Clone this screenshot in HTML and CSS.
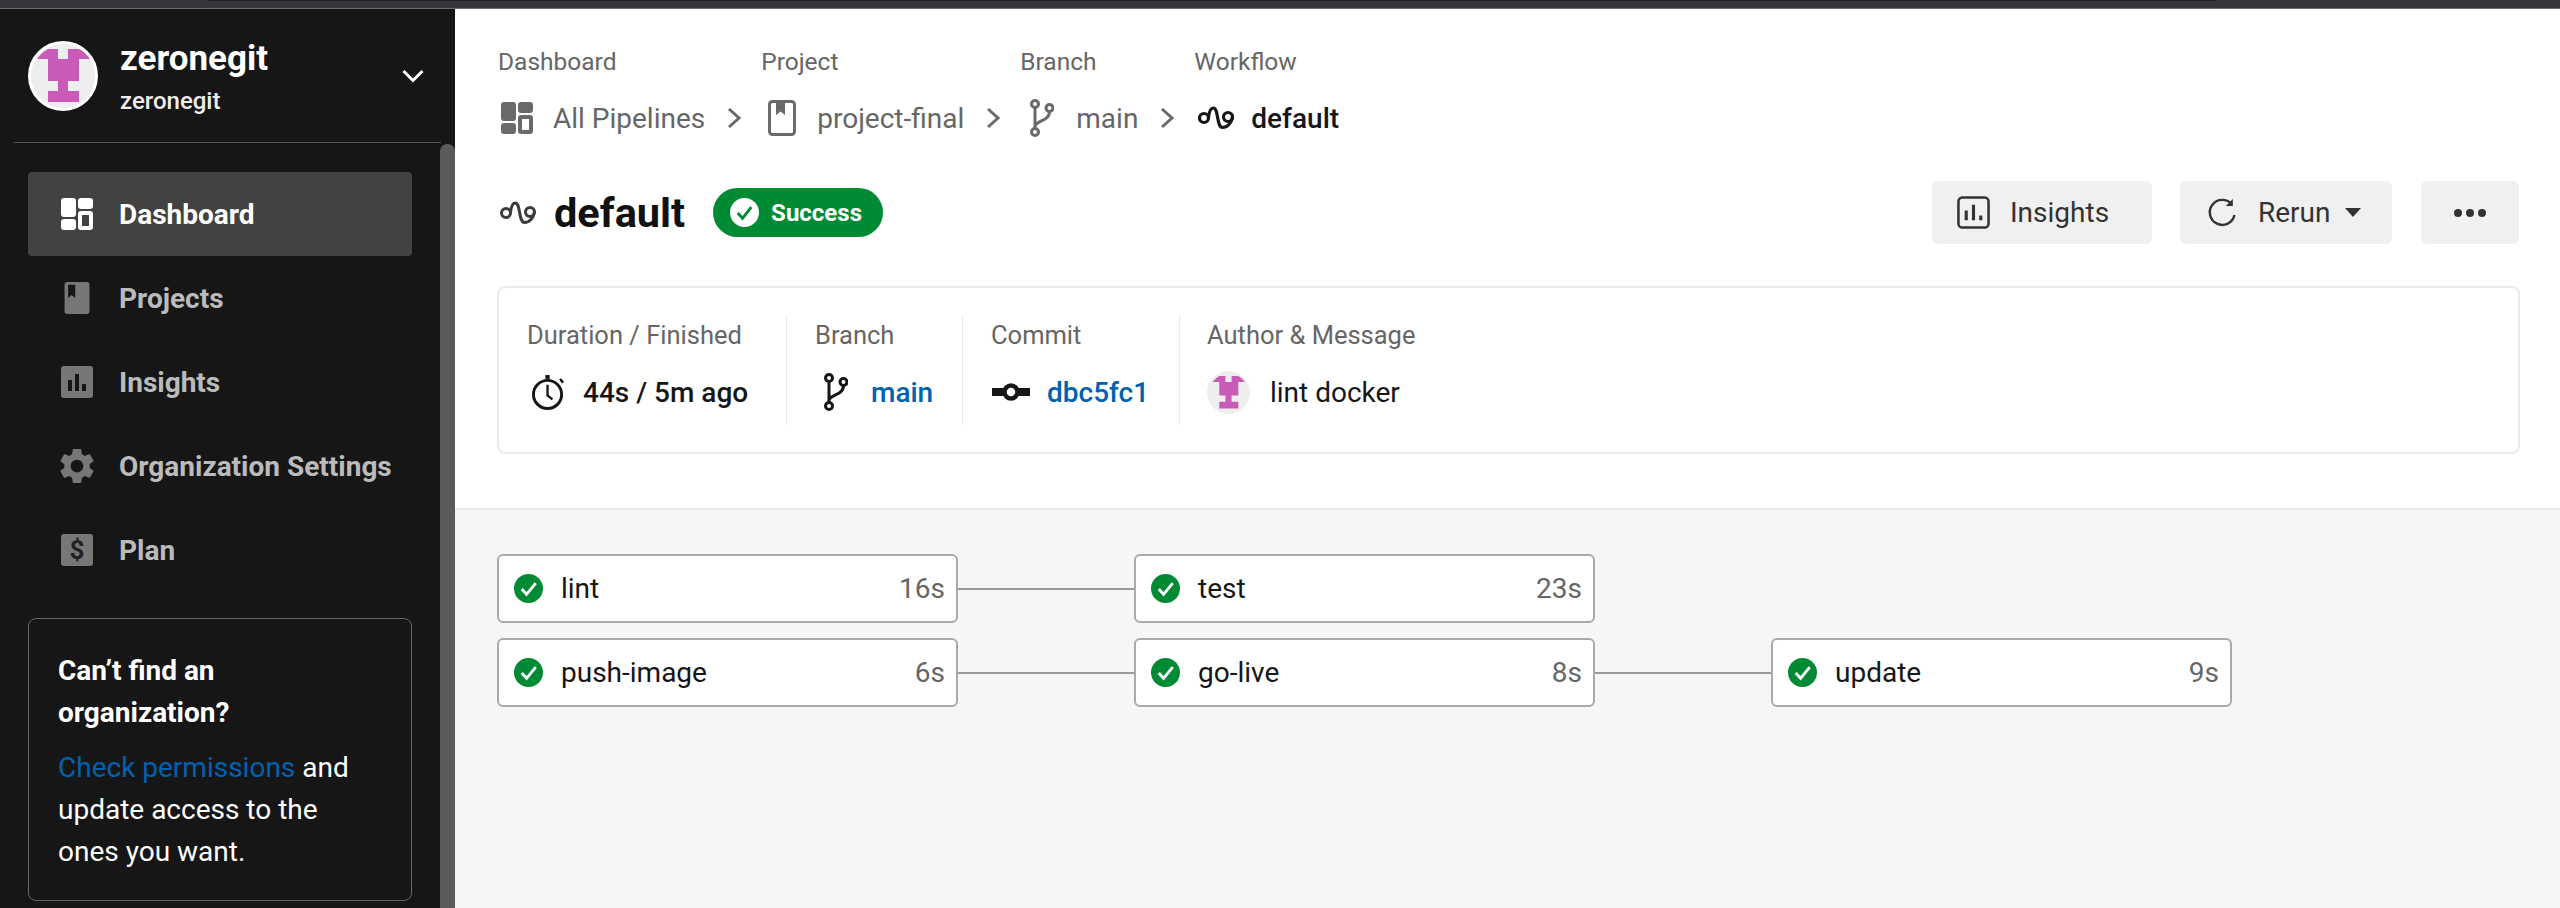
FILE: index.html
```html
<!DOCTYPE html>
<html lang="en">
<head>
    <meta charset="UTF-8">
    <title>default - Pipelines</title>
    <link rel="stylesheet" href="styles.css">
</head>
<body>
    <div class="top-strip"><div class="top-strip-tab"></div></div>
    <div class="app">
        <aside class="sidebar">
            <div class="scroll-thumb"></div>
            <div class="org">
                <svg class="avatar" viewBox="0 0 70 70">
                    <circle cx="35" cy="35" r="33.500" fill="#eeeeee" stroke="#ffffff" stroke-width="3"/>
                    <path d="M9 18 Q14 11 20 8 H30 V18 H40 V8 H51 Q57 11 62 18 H51 V40 H40 V50 H51 V61 H20 V50 H30 V40 H20 V18 Z" fill="#c85bb8"/>
                </svg>
                <div class="org-names">
                    <div class="org-title">zeronegit</div>
                    <div class="org-sub">zeronegit</div>
                </div>
                <svg class="org-chevron" viewBox="0 0 22 14"><path d="M1.500 2 L11 11.500 L20.500 2" fill="none" stroke="#fff" stroke-width="3"/></svg>
            </div>

            <nav class="nav">
                <a class="nav-item active">
                    <svg class="nav-icon" viewBox="0 0 32 32" fill="currentColor">
                        <rect x="0" y="0" width="15" height="19" rx="3"/>
                        <rect x="0" y="21" width="15" height="11" rx="3"/>
                        <rect x="17" y="0" width="15" height="11" rx="3"/>
                        <path fill-rule="evenodd" d="M20 13 H29 a3 3 0 0 1 3 3 V29 a3 3 0 0 1 -3 3 H20 a3 3 0 0 1 -3 -3 V16 a3 3 0 0 1 3 -3 Z M21 17 V28 H28 V17 Z"/>
                    </svg>
                    Dashboard
                </a>
                <a class="nav-item">
                    <svg class="nav-icon" viewBox="0 0 32 36" fill="currentColor">
                        <path fill-rule="evenodd" d="M5 0 H27 a3 3 0 0 1 3 3 V33 a3 3 0 0 1 -3 3 H5 a3 3 0 0 1 -3 -3 V3 a3 3 0 0 1 3 -3 Z M6 3 V18 L10 14.500 L14 18 V3 Z"/>
                    </svg>
                    Projects
                </a>
                <a class="nav-item">
                    <svg class="nav-icon" viewBox="0 0 32 32" fill="currentColor">
                        <path fill-rule="evenodd" d="M3 0 H29 a3 3 0 0 1 3 3 V29 a3 3 0 0 1 -3 3 H3 a3 3 0 0 1 -3 -3 V3 a3 3 0 0 1 3 -3 Z M7 14 V25 H11 V14 Z M14 8 V25 H18 V8 Z M21 18 V25 H25 V18 Z"/>
                    </svg>
                    Insights
                </a>
                <a class="nav-item">
                    <svg class="nav-icon gear" viewBox="2.400 2 19.200 20" fill="currentColor">
                        <path d="M19.14 12.94c.04-.3.06-.61.06-.94 0-.32-.02-.64-.07-.94l2.03-1.58c.18-.14.23-.41.12-.61l-1.92-3.32c-.12-.22-.37-.29-.59-.22l-2.39.96c-.5-.38-1.03-.7-1.62-.94l-.36-2.54c-.04-.24-.24-.41-.48-.41h-3.84c-.24 0-.43.17-.47.41l-.36 2.54c-.59.24-1.13.57-1.62.94l-2.39-.96c-.22-.08-.47 0-.59.22L2.74 8.87c-.12.21-.08.47.12.61l2.03 1.58c-.05.3-.09.63-.09.94s.02.64.07.94l-2.03 1.58c-.18.14-.23.41-.12.61l1.92 3.32c.12.22.37.29.59.22l2.39-.96c.5.38 1.03.7 1.62.94l.36 2.54c.05.24.24.41.48.41h3.84c.24 0 .44-.17.47-.41l.36-2.54c.59-.24 1.13-.56 1.62-.94l2.39.96c.22.08.47 0 .59-.22l1.92-3.32c.12-.22.07-.47-.12-.61l-2.01-1.58zM12 15.6c-1.98 0-3.6-1.62-3.6-3.6s1.62-3.6 3.6-3.6 3.6 1.62 3.6 3.6-1.62 3.6-3.6 3.6z"/>
                    </svg>
                    Organization Settings
                </a>
                <a class="nav-item">
                    <svg class="nav-icon" viewBox="0 0 32 32">
                        <rect width="32" height="32" rx="3" fill="currentColor"/>
                        <text x="16" y="25" text-anchor="middle" class="dollar">$</text>
                    </svg>
                    Plan
                </a>
            </nav>

            <div class="org-help">
                <h4>Can’t find an organization?</h4>
                <p><a href="#">Check permissions</a> and update access to the ones you want.</p>
            </div>
        </aside>

        <main class="main">
            <section class="head">
                <div class="crumbs">
                    <div class="crumb">
                        <div class="crumb-label">Dashboard</div>
                        <div class="crumb-row">
                            <svg class="crumb-icon ic-dash" viewBox="0 0 32 32" fill="#6a6a6a">
                                <rect x="0" y="0" width="15" height="19" rx="3"/>
                                <rect x="0" y="21" width="15" height="11" rx="3"/>
                                <rect x="17" y="0" width="15" height="11" rx="3"/>
                                <path fill-rule="evenodd" d="M20 13 H29 a3 3 0 0 1 3 3 V29 a3 3 0 0 1 -3 3 H20 a3 3 0 0 1 -3 -3 V16 a3 3 0 0 1 3 -3 Z M21 17 V28 H28 V17 Z"/>
                            </svg>
                            <span>All Pipelines</span>
                            <svg class="crumb-sep" viewBox="0 0 14 22"><path d="M2 2 L12 11 L2 20" fill="none" stroke="#6a6a6a" stroke-width="3"/></svg>
                        </div>
                    </div>
                    <div class="crumb">
                        <div class="crumb-label">Project</div>
                        <div class="crumb-row">
                            <svg class="crumb-icon ic-book" viewBox="0 0 28 36">
                                <rect x="1.500" y="1.500" width="25" height="33" rx="3" fill="none" stroke="#6a6a6a" stroke-width="3"/>
                                <path d="M8 3 H17 V15 L12.500 11.500 L8 15 Z" fill="#6a6a6a"/>
                            </svg>
                            <span>project-final</span>
                            <svg class="crumb-sep" viewBox="0 0 14 22"><path d="M2 2 L12 11 L2 20" fill="none" stroke="#6a6a6a" stroke-width="3"/></svg>
                        </div>
                    </div>
                    <div class="crumb">
                        <div class="crumb-label">Branch</div>
                        <div class="crumb-row">
                            <svg class="crumb-icon ic-branch" viewBox="0 0 24 38" fill="none" stroke="#6a6a6a" stroke-width="3">
                                <circle cx="5" cy="5" r="3.500"/><circle cx="5" cy="33" r="3.500"/><circle cx="19.500" cy="9" r="3.500"/>
                                <path d="M5 8.500 V29.500 M5 27 C7 21 19.500 22 19.500 12.500"/>
                            </svg>
                            <span>main</span>
                            <svg class="crumb-sep" viewBox="0 0 14 22"><path d="M2 2 L12 11 L2 20" fill="none" stroke="#6a6a6a" stroke-width="3"/></svg>
                        </div>
                    </div>
                    <div class="crumb">
                        <div class="crumb-label">Workflow</div>
                        <div class="crumb-row current">
                            <svg class="crumb-icon ic-flow" viewBox="0 0 36 24" fill="none" stroke="#161616" stroke-width="3.200">
                                <circle cx="6" cy="12" r="4.500"/><circle cx="30" cy="11" r="4.500"/>
                                <path d="M10.500 12 C11 5 13 2 15.500 2 C20.500 2 18.500 21.500 24.500 21.500 C29.500 21.500 33.500 17 34.500 11"/>
                            </svg>
                            <span>default</span>
                        </div>
                    </div>
                </div>

                <div class="title-row">
                    <svg class="title-icon" viewBox="0 0 36 24" fill="none" stroke="#3a3a3a" stroke-width="3">
                        <circle cx="6" cy="12" r="4.500"/><circle cx="30" cy="11" r="4.500"/>
                        <path d="M10.500 12 C11 5 13 2 15.500 2 C20.500 2 18.500 21.500 24.500 21.500 C29.500 21.500 33.500 17 34.500 11"/>
                    </svg>
                    <h1>default</h1>
                    <span class="pill">
                        <svg viewBox="0 0 30 30"><circle cx="15" cy="15" r="15" fill="#fff"/><path d="M8 15.500 L13 21 L22 9.500" fill="none" stroke="#008a34" stroke-width="3"/></svg>
                        Success
                    </span>
                    <div class="actions">
                        <button class="btn btn-insights">
                            <svg viewBox="0 0 34 34" fill="none" stroke="#333" stroke-width="2.600">
                                <rect x="1.500" y="1.500" width="31" height="31" rx="4"/>
                                <path d="M9.500 25 V15 M17 25 V9 M24.500 25 V20" stroke-width="3.200"/>
                            </svg>
                            Insights
                        </button>
                        <button class="btn btn-rerun">
                            <svg viewBox="0 0 30 30" fill="none" stroke="#333" stroke-width="2.400">
                                <path d="M25 6.500 A12.500 12.500 0 1 0 27.500 17"/>
                                <path d="M25.800 1 V8 H18.800 Z" stroke="none" fill="#333"/>
                            </svg>
                            Rerun
                            <span class="caret"></span>
                        </button>
                        <button class="btn btn-more">
                            <span class="dot"></span><span class="dot"></span><span class="dot"></span>
                        </button>
                    </div>
                </div>

                <div class="summary">
                    <div class="field field-time">
                        <div class="field-label">Duration / Finished</div>
                        <div class="field-value">
                            <svg class="ic-watch" viewBox="0 0 34 38" fill="none" stroke="#161616" stroke-width="3">
                                <circle cx="16" cy="21" r="14.500"/>
                                <path d="M16 11 V22 L21 26" stroke-width="2.400"/>
                                <path d="M16 1 V5" stroke-width="4.500"/>
                                <path d="M29 5 L32 9" stroke-width="2.600"/>
                            </svg>
                            44s / 5m ago
                        </div>
                    </div>
                    <div class="field field-branch">
                        <div class="field-label">Branch</div>
                        <div class="field-value">
                            <svg class="ic-branch-sm" viewBox="0 0 24 38" fill="none" stroke="#161616" stroke-width="3">
                                <circle cx="5" cy="5" r="3.500"/><circle cx="5" cy="33" r="3.500"/><circle cx="19.500" cy="9" r="3.500"/>
                                <path d="M5 8.500 V29.500 M5 27 C7 21 19.500 22 19.500 12.500"/>
                            </svg>
                            <a href="#">main</a>
                        </div>
                    </div>
                    <div class="field field-commit">
                        <div class="field-label">Commit</div>
                        <div class="field-value">
                            <svg class="ic-commit" viewBox="0 0 38 18">
                                <path d="M0 9 H38" stroke="#161616" stroke-width="8"/>
                                <circle cx="19" cy="9" r="6.500" fill="#fff" stroke="#161616" stroke-width="4.500"/>
                            </svg>
                            <a href="#">dbc5fc1</a>
                        </div>
                    </div>
                    <div class="field field-author">
                        <div class="field-label">Author &amp; Message</div>
                        <div class="field-value">
                            <svg class="avatar-sm" viewBox="0 0 70 70">
                                <circle cx="35" cy="35" r="35" fill="#eeeeee"/>
                                <path d="M9 18 Q14 11 20 8 H30 V18 H40 V8 H51 Q57 11 62 18 H51 V40 H40 V50 H51 V61 H20 V50 H30 V40 H20 V18 Z" fill="#c85bb8"/>
                            </svg>
                            lint docker
                        </div>
                    </div>
                </div>
            </section>

            <section class="graph">
                <div class="job">
                    <svg class="job-check" viewBox="0 0 30 30"><circle cx="15" cy="15" r="15" fill="#008a34"/><path d="M8 15.500 L13 21 L22.500 9.500" fill="none" stroke="#fff" stroke-width="3"/></svg>
                    <span class="job-name">lint</span><span class="job-time">16s</span>
                </div>
                <div class="link"></div>
                <div class="job">
                    <svg class="job-check" viewBox="0 0 30 30"><circle cx="15" cy="15" r="15" fill="#008a34"/><path d="M8 15.500 L13 21 L22.500 9.500" fill="none" stroke="#fff" stroke-width="3"/></svg>
                    <span class="job-name">test</span><span class="job-time">23s</span>
                </div>
                <div></div>
                <div></div>

                <div class="job">
                    <svg class="job-check" viewBox="0 0 30 30"><circle cx="15" cy="15" r="15" fill="#008a34"/><path d="M8 15.500 L13 21 L22.500 9.500" fill="none" stroke="#fff" stroke-width="3"/></svg>
                    <span class="job-name">push-image</span><span class="job-time">6s</span>
                </div>
                <div class="link"></div>
                <div class="job">
                    <svg class="job-check" viewBox="0 0 30 30"><circle cx="15" cy="15" r="15" fill="#008a34"/><path d="M8 15.500 L13 21 L22.500 9.500" fill="none" stroke="#fff" stroke-width="3"/></svg>
                    <span class="job-name">go-live</span><span class="job-time">8s</span>
                </div>
                <div class="link"></div>
                <div class="job">
                    <svg class="job-check" viewBox="0 0 30 30"><circle cx="15" cy="15" r="15" fill="#008a34"/><path d="M8 15.500 L13 21 L22.500 9.500" fill="none" stroke="#fff" stroke-width="3"/></svg>
                    <span class="job-name">update</span><span class="job-time">9s</span>
                </div>
            </section>
        </main>
    </div>
</body>
</html>
```

FILE: styles.css
```css
* {
    margin: 0;
    padding: 0;
    box-sizing: border-box;
    font-family: 'Roboto', sans-serif;
}

body {
    height: 100vh;
    overflow: hidden;
    display: flex;
    flex-direction: column;
    background-color: #ffffff;
}

a {
    color: #0061b0;
    text-decoration: none;
}

.top-strip {
    height: 9px;
    flex: none;
    background-color: #36373b;
    border-bottom: 1px solid #6a6b6e;
}

.top-strip-tab {
    height: 1px;
    width: 2010px;
    margin-left: 207px;
    background-color: #202124;
}

.app {
    flex: 1;
    display: flex;
    min-height: 0;
}

/* sidebar */

.sidebar {
    width: 455px;
    flex: none;
    background-color: #161616;
    position: relative;
    overflow: hidden;
    padding: 0 0 0 14px;
}

.scroll-thumb {
    position: absolute;
    right: 0;
    top: 135px;
    bottom: 0;
    width: 15px;
    background-color: #5a5a5a;
    border-radius: 7px 7px 0 0;
}

.org {
    width: 427px;
    height: 134px;
    padding: 32px 0 0 14px;
    display: flex;
    align-items: flex-start;
    border-bottom: 1px solid #555;
}

.avatar {
    width: 70px;
    height: 70px;
    flex: none;
}

.org-names {
    margin: -1px 0 0 22px;
    flex: 1;
}

.org-title {
    color: #ffffff;
    font-size: 35px;
    font-weight: 700;
    line-height: 38px;
}

.org-sub {
    color: #eeeeee;
    font-size: 24px;
    font-weight: 500;
    line-height: 28px;
    margin-top: 9px;
}

.org-chevron {
    width: 22px;
    height: 14px;
    margin: 28px 17px 0 0;
}

.nav {
    margin: 29px 0 0 14px;
    width: 384px;
}

.nav-item {
    height: 84px;
    display: flex;
    align-items: center;
    color: #bbbbbb;
    font-size: 28px;
    font-weight: 700;
    border-radius: 4px;
    padding-left: 33px;
}

.nav-item.active {
    background-color: #424242;
    color: #ffffff;
}

.nav-item .nav-icon {
    color: #777777;
}

.nav-item.active .nav-icon {
    color: #ffffff;
}

.nav-icon {
    width: 32px;
    height: 32px;
    flex: none;
    margin-right: 26px;
}

.gear {
    height: 36px;
    width: 34px;
    margin-left: -1px;
    margin-right: 25px;
}

.dollar {
    font-family: 'Roboto', sans-serif;
    font-size: 26px;
    font-weight: 700;
    fill: #222222;
}

.org-help {
    margin: 26px 0 0 14px;
    width: 384px;
    height: 283px;
    border: 1px solid #666;
    border-radius: 8px;
    padding: 31px 36px 0 29px;
    color: #ffffff;
    font-size: 28px;
    line-height: 42px;
}

.org-help h4 {
    font-size: 28px;
    font-weight: 700;
    margin-bottom: 13px;
}

/* main */

.main {
    flex: 1;
    display: flex;
    flex-direction: column;
    min-width: 0;
}

.head {
    height: 501px;
    flex: none;
    padding: 39px 40px 0 43px;
    border-bottom: 2px solid #e8e8e8;
}

.crumbs {
    display: flex;
    gap: 21px;
}

.crumb-label {
    font-size: 24.500px;
    line-height: 28px;
    color: #666666;
}

.crumb + .crumb .crumb-label {
    margin-left: -1px;
}

.crumb-row {
    margin-top: 20px;
    height: 44px;
    display: flex;
    align-items: center;
    font-size: 28px;
    color: #666666;
}

.crumb-row.current {
    color: #161616;
    font-weight: 500;
}

.crumb-sep {
    width: 14px;
    height: 22px;
    margin-left: 22px;
}

.ic-dash {
    width: 32px;
    height: 32px;
    margin: 0 20px 0 3px;
}

.ic-book {
    width: 28px;
    height: 36px;
    margin: 0 21px 0 6px;
}

.ic-branch {
    width: 24px;
    height: 38px;
    margin: 0 22px 0 9px;
}

.ic-flow {
    width: 36px;
    height: 24px;
    margin: 0 17px 0 3px;
}

.title-row {
    margin-top: 41px;
    height: 63px;
    display: flex;
    align-items: center;
}

.title-icon {
    width: 36px;
    height: 24px;
    margin: 0 18px 0 2px;
}

h1 {
    font-size: 41.500px;
    font-weight: 700;
    color: #111111;
}

.pill {
    margin-left: 28px;
    height: 49px;
    padding: 0 21px 0 17px;
    display: flex;
    align-items: center;
    gap: 12px;
    background-color: #008a34;
    color: #ffffff;
    font-size: 24px;
    font-weight: 700;
    border-radius: 25px;
}

.pill svg {
    width: 29px;
    height: 29px;
}

.actions {
    margin: 0 1px 0 auto;
    display: flex;
    gap: 28px;
}

.btn {
    height: 63px;
    border: none;
    border-radius: 6px;
    background-color: #f0f0f0;
    color: #333333;
    font-size: 28px;
    display: flex;
    align-items: center;
}

.btn-insights {
    width: 220px;
    padding-left: 25px;
    gap: 20px;
}

.btn-insights svg {
    width: 33px;
    height: 33px;
}

.btn-rerun {
    width: 212px;
    padding-left: 27px;
    gap: 21px;
}

.btn-rerun svg {
    width: 30px;
    height: 30px;
}

.caret {
    width: 0;
    height: 0;
    margin-left: -7px;
    border-left: 8px solid transparent;
    border-right: 8px solid transparent;
    border-top: 9px solid #333333;
}

.btn-more {
    width: 98px;
    margin-left: 1px;
    justify-content: center;
    gap: 4px;
}

.dot {
    width: 8px;
    height: 8px;
    border-radius: 50%;
    background-color: #333333;
}

.summary {
    margin: 42px 0 0 -1px;
    height: 168px;
    border: 2px solid #ebebeb;
    border-radius: 8px;
    padding: 27px 0 0 28px;
    display: flex;
    align-items: flex-start;
}

.field {
    height: 110px;
    padding-top: 6px;
}

.field-time {
    width: 260px;
    border-right: 1px solid #ebebeb;
}

.field-branch {
    width: 176px;
    padding-left: 28px;
    border-right: 1px solid #ebebeb;
}

.field-commit {
    width: 217px;
    padding-left: 28px;
    border-right: 1px solid #ebebeb;
}

.field-author {
    padding-left: 27px;
}

.field-label {
    font-size: 25.500px;
    line-height: 28px;
    color: #666666;
}

.field-value {
    margin-top: 23px;
    height: 40px;
    display: flex;
    align-items: center;
    font-size: 28px;
    font-weight: 500;
    color: #161616;
}

.field-author .field-value {
    font-weight: 400;
}

.ic-watch {
    width: 33px;
    height: 37px;
    margin: 0 18px 0 5px;
}

.ic-branch-sm {
    width: 24px;
    height: 38px;
    margin: 0 23px 0 9px;
}

.ic-commit {
    width: 38px;
    height: 18px;
    margin: 0 17px 0 1px;
}

.avatar-sm {
    width: 43px;
    height: 43px;
    margin-right: 20px;
}

/* pipeline graph */

.graph {
    flex: 1;
    background-color: #f6f6f6;
    padding: 44px 0 0 42px;
    display: grid;
    grid-template-columns: 461px 176px 461px 176px 461px;
    grid-auto-rows: 69px;
    row-gap: 15px;
    align-content: start;
}

.job {
    background-color: #ffffff;
    border: 2px solid #aaaaaa;
    border-radius: 6px;
    padding: 0 11px 0 15px;
    display: flex;
    align-items: center;
    font-size: 28px;
}

.job-check {
    width: 29px;
    height: 29px;
    flex: none;
}

.job-name {
    margin-left: 18px;
    color: #161616;
}

.job-time {
    margin-left: auto;
    color: #666666;
}

.link {
    align-self: center;
    height: 2px;
    background-color: #999999;
}
```
